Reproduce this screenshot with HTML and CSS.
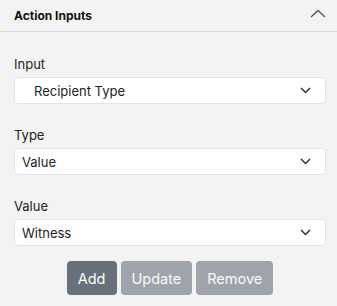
FILE: index.html
```html
<!DOCTYPE html>
<html lang="en">
<head>
  <meta charset="UTF-8" />
  <title>Action Inputs</title>
  <link rel="stylesheet" href="styles.css">
</head>
<body>

<div class="panel">
  <div class="panel-head">
    <span class="panel-title">Action Inputs</span>
    <svg class="collapse" width="16" height="9" viewBox="0 0 16 9">
      <path d="M1 8 L8 1.5 L15 8" fill="none" stroke="#555" stroke-width="1.3"/>
    </svg>
  </div>

  <div class="panel-body">
    <div class="field">
      <label>Input</label>
      <div class="select indent">
        <span>Recipient Type</span>
        <svg width="11" height="7" viewBox="0 0 11 7"><path d="M1 1 L5.5 5.5 L10 1" fill="none" stroke="#333" stroke-width="1.5"/></svg>
      </div>
    </div>

    <div class="field">
      <label>Type</label>
      <div class="select">
        <span>Value</span>
        <svg width="11" height="7" viewBox="0 0 11 7"><path d="M1 1 L5.5 5.5 L10 1" fill="none" stroke="#333" stroke-width="1.5"/></svg>
      </div>
    </div>

    <div class="field">
      <label>Value</label>
      <div class="select">
        <span>Witness</span>
        <svg width="11" height="7" viewBox="0 0 11 7"><path d="M1 1 L5.5 5.5 L10 1" fill="none" stroke="#333" stroke-width="1.5"/></svg>
      </div>
    </div>

    <div class="actions">
      <button class="btn">Add</button>
      <button class="btn" disabled>Update</button>
      <button class="btn" disabled>Remove</button>
    </div>
  </div>
</div>

</body>
</html>
```

FILE: styles.css
```css
body {
  margin: 0;
  font-family: Inter, "Noto Sans", sans-serif;
  background: #f3f3f3;
  color: #222;
}
.panel-head {
  height: 31px;
  display: flex;
  align-items: center;
  justify-content: space-between;
  padding: 0 11px 0 14px;
  border-bottom: 1px solid #dcdcdc;
}
.panel-title {
  font-size: 12px;
  font-weight: 700;
  color: #111;
}
.collapse {
  margin-top: -4px;
}
.panel-body {
  padding: 24px 11px 0 14px;
}
.field {
  margin-bottom: 23px;
}
.field label {
  display: block;
  font-size: 13px;
  line-height: 16px;
  margin-bottom: 5px;
  color: #222;
}
.select {
  height: 25px;
  background: white;
  border: 1px solid #e2e4e8;
  border-radius: 4px;
  display: flex;
  align-items: center;
  justify-content: space-between;
  padding: 0 14px 0 7px;
  font-size: 13px;
  color: #222;
}
.select.indent {
  padding-left: 19px;
}
.actions {
  display: flex;
  justify-content: center;
  gap: 4px;
  margin-top: -8px;
}
.btn {
  font-family: Inter, "Noto Sans", sans-serif;
  font-size: 14.5px;
  height: 34px;
  padding: 0 11px;
  border: none;
  border-radius: 4px;
  background: #68717a;
  color: white;
}
.btn:disabled {
  opacity: 0.6;
}
```
